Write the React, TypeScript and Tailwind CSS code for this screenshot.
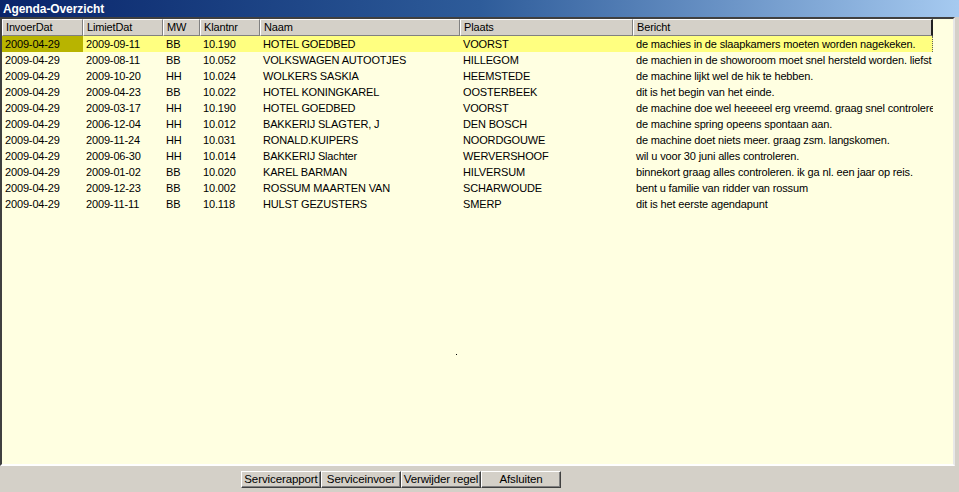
import React from "react";

const cols = [
  { name: "InvoerDat", w: 81 },
  { name: "LimietDat", w: 80 },
  { name: "MW", w: 37 },
  { name: "Klantnr", w: 60 },
  { name: "Naam", w: 200 },
  { name: "Plaats", w: 173 },
  { name: "Bericht", w: 300 },
];

const rows: string[][] = [
  ["2009-04-29", "2009-09-11", "BB", "10.190", "HOTEL GOEDBED", "VOORST", "de machies in de slaapkamers moeten worden nagekeken."],
  ["2009-04-29", "2009-08-11", "BB", "10.052", "VOLKSWAGEN AUTOOTJES", "HILLEGOM", "de machien in de showoroom moet snel hersteld worden. liefst"],
  ["2009-04-29", "2009-10-20", "HH", "10.024", "WOLKERS SASKIA", "HEEMSTEDE", "de machine lijkt wel de hik te hebben."],
  ["2009-04-29", "2009-04-23", "BB", "10.022", "HOTEL KONINGKAREL", "OOSTERBEEK", "dit is het begin van het einde."],
  ["2009-04-29", "2009-03-17", "HH", "10.190", "HOTEL GOEDBED", "VOORST", "de machine doe wel heeeeel erg vreemd. graag snel controleren"],
  ["2009-04-29", "2006-12-04", "HH", "10.012", "BAKKERIJ SLAGTER, J", "DEN BOSCH", "de machine spring opeens spontaan aan."],
  ["2009-04-29", "2009-11-24", "HH", "10.031", "RONALD.KUIPERS", "NOORDGOUWE", "de machine doet niets meer. graag zsm. langskomen."],
  ["2009-04-29", "2009-06-30", "HH", "10.014", "BAKKERIJ Slachter", "WERVERSHOOF", "wil u voor 30 juni alles controleren."],
  ["2009-04-29", "2009-01-02", "BB", "10.020", "KAREL BARMAN", "HILVERSUM", "binnekort graag alles controleren. ik ga nl. een jaar op reis."],
  ["2009-04-29", "2009-12-23", "BB", "10.002", "ROSSUM MAARTEN VAN", "SCHARWOUDE", "bent u familie van ridder van rossum"],
  ["2009-04-29", "2009-11-11", "BB", "10.118", "HULST GEZUSTERS", "SMERP", "dit is het eerste agendapunt"],
];

const buttons = ["Servicerapport", "Serviceinvoer", "Verwijder regel", "Afsluiten"];

export default function App() {
  return (
    <div
      className="relative w-[959px] h-[492px] overflow-hidden bg-[#d4d0c8] text-black"
      style={{ fontFamily: '"Liberation Sans", Arial, sans-serif' }}
    >
      <div className="h-[17px] bg-gradient-to-r from-[#0a246a] via-[#2e5c9a] to-[#a6caf0] flex items-center pl-[3px]">
        <span className="text-white font-bold text-[12px] leading-none tracking-[-0.1px]">Agenda-Overzicht</span>
      </div>
      <div className="w-[955px] h-[449px] border-2 border-t-[#404040] border-l-[#404040] border-r-[#e8e8e8] border-b-[#ffffff] bg-[#ffffe1] overflow-hidden relative">
        <div className="flex h-[17px]">
          {cols.map((c, i) => (
            <div
              key={c.name}
              className={`h-[17px] flex items-center pl-[3px] text-[11px] leading-none tracking-[-0.15px] bg-[#d4d0c8] border-l border-t border-l-white border-t-white border-b border-b-[#808080] ${
                i === cols.length - 1 ? "border-r-2 border-r-[#202020]" : "border-r border-r-[#808080]"
              }`}
              style={{ width: c.w }}
            >
              {c.name}
            </div>
          ))}
        </div>
        {rows.map((r, ri) => (
          <div key={ri} className={`flex h-[16px] ${ri === 0 ? "bg-[#ffff80]" : ""}`} style={{ width: 931 }}>
            {r.map((cell, ci) => (
              <div
                key={ci}
                className={`h-[16px] flex items-center pl-[3px] text-[11px] leading-none tracking-[-0.15px] whitespace-nowrap overflow-hidden ${
                  ri === 0 && ci === 0 ? "bg-[#b8b400]" : ""
                } ${ri === 0 && ci === 6 ? "border-r border-dotted border-r-[#606060]" : ""}`}
                style={{ width: cols[ci].w }}
              >
                {cell}
              </div>
            ))}
          </div>
        ))}
        <div className="absolute left-[454px] top-[335px] w-px h-px bg-black" />
      </div>
      <div className="flex pl-[241px] pt-[5px]">
        {buttons.map((b) => (
          <button
            key={b}
            className="w-[80px] h-[17px] text-[11.5px] leading-none tracking-[-0.1px] bg-[#d4d0c8] border border-t-white border-l-white border-r-[#404040] border-b-[#404040] shadow-[inset_-1px_-1px_0_#808080] flex items-center justify-center"
          >
            {b}
          </button>
        ))}
      </div>
    </div>
  );
}
